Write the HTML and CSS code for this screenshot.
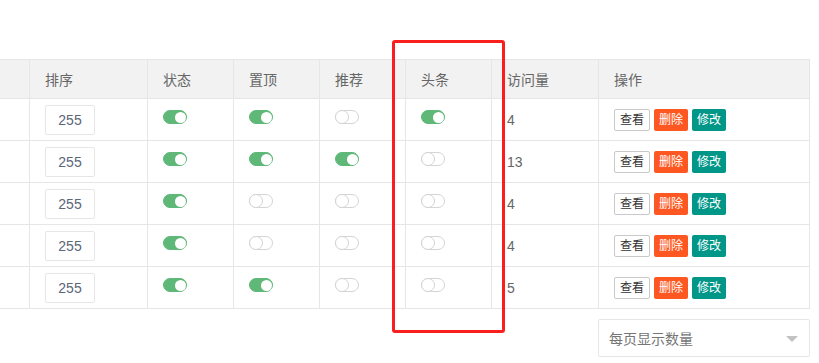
FILE: index.html
```html
<!DOCTYPE html>
<html lang="zh-CN">
<head>
<meta charset="utf-8">
<title>列表</title>
<link rel="stylesheet" href="styles.css">
</head>
<body>
<div class="page">
  <div class="grid">
    <div class="row head">
      <div class="cell"></div>
      <div class="cell">排序</div>
      <div class="cell">状态</div>
      <div class="cell">置顶</div>
      <div class="cell">推荐</div>
      <div class="cell">头条</div>
      <div class="cell">访问量</div>
      <div class="cell">操作</div>
    </div>
    <div class="row">
      <div class="cell"></div>
      <div class="cell"><div class="sort">255</div></div>
      <div class="cell sw"><span class="switch on"></span></div>
      <div class="cell sw"><span class="switch on"></span></div>
      <div class="cell sw"><span class="switch"></span></div>
      <div class="cell sw"><span class="switch on"></span></div>
      <div class="cell">4</div>
      <div class="cell ops"><span class="btn plain">查看</span><span class="btn danger">删除</span><span class="btn normal">修改</span></div>
    </div>
    <div class="row">
      <div class="cell"></div>
      <div class="cell"><div class="sort">255</div></div>
      <div class="cell sw"><span class="switch on"></span></div>
      <div class="cell sw"><span class="switch on"></span></div>
      <div class="cell sw"><span class="switch on"></span></div>
      <div class="cell sw"><span class="switch"></span></div>
      <div class="cell">13</div>
      <div class="cell ops"><span class="btn plain">查看</span><span class="btn danger">删除</span><span class="btn normal">修改</span></div>
    </div>
    <div class="row">
      <div class="cell"></div>
      <div class="cell"><div class="sort">255</div></div>
      <div class="cell sw"><span class="switch on"></span></div>
      <div class="cell sw"><span class="switch"></span></div>
      <div class="cell sw"><span class="switch"></span></div>
      <div class="cell sw"><span class="switch"></span></div>
      <div class="cell">4</div>
      <div class="cell ops"><span class="btn plain">查看</span><span class="btn danger">删除</span><span class="btn normal">修改</span></div>
    </div>
    <div class="row">
      <div class="cell"></div>
      <div class="cell"><div class="sort">255</div></div>
      <div class="cell sw"><span class="switch on"></span></div>
      <div class="cell sw"><span class="switch"></span></div>
      <div class="cell sw"><span class="switch"></span></div>
      <div class="cell sw"><span class="switch"></span></div>
      <div class="cell">4</div>
      <div class="cell ops"><span class="btn plain">查看</span><span class="btn danger">删除</span><span class="btn normal">修改</span></div>
    </div>
    <div class="row">
      <div class="cell"></div>
      <div class="cell"><div class="sort">255</div></div>
      <div class="cell sw"><span class="switch on"></span></div>
      <div class="cell sw"><span class="switch on"></span></div>
      <div class="cell sw"><span class="switch"></span></div>
      <div class="cell sw"><span class="switch"></span></div>
      <div class="cell">5</div>
      <div class="cell ops"><span class="btn plain">查看</span><span class="btn danger">删除</span><span class="btn normal">修改</span></div>
    </div>
  </div>
  <div class="pager">
    <div class="select">
      <span class="placeholder">每页显示数量</span>
      <span class="caret"></span>
    </div>
  </div>
  <div class="highlight"></div>
</div>
</body>
</html>
```

FILE: styles.css
```css
html, body {
  margin: 0;
  padding: 0;
  background: #fff;
}
body {
  font-family: "Liberation Sans", "Noto Sans CJK SC", sans-serif;
  font-size: 14px;
  color: #666;
  overflow: hidden;
}
.page {
  position: relative;
  width: 819px;
  height: 363px;
  padding-top: 59px;
  box-sizing: border-box;
}
.grid {
  margin-left: -20px;
  width: 830px;
  border-top: 1px solid #e6e6e6;
}
.row {
  display: grid;
  grid-template-columns: 50px 118px 86px 86px 86px 86px 107px 211px;
  height: 42px;
}
.row.head {
  height: 39px;
  background: #f2f2f2;
}
.cell {
  box-sizing: border-box;
  border-right: 1px solid #e6e6e6;
  border-bottom: 1px solid #e6e6e6;
  padding: 0 15px;
  display: flex;
  align-items: center;
  white-space: nowrap;
}
.sort {
  box-sizing: border-box;
  width: 50px;
  height: 30px;
  border: 1px solid #e6e6e6;
  border-radius: 2px;
  color: #5c6678;
  display: flex;
  align-items: center;
  justify-content: center;
  margin-top: 1px;
}
.cell.sw {
  align-items: flex-start;
  padding-top: 11px;
}
.switch {
  position: relative;
  display: block;
  box-sizing: border-box;
  width: 24px;
  height: 14px;
  border: 1px solid #d4d4d4;
  border-radius: 7px;
  background: #fff;
}
.switch::after {
  content: "";
  position: absolute;
  left: -1px;
  top: -1px;
  box-sizing: border-box;
  width: 14px;
  height: 14px;
  border: 1.5px solid #d4d4d4;
  border-radius: 50%;
  background: #fff;
}
.switch.on {
  border-color: #5fb878;
  background: #5fb878;
}
.switch.on::after {
  left: auto;
  right: 0.5px;
  top: 0.5px;
  width: 11px;
  height: 11px;
  border: none;
}
.cell.ops {
  gap: 4px;
  padding-top: 1px;
}
.btn {
  display: inline-block;
  box-sizing: border-box;
  height: 22px;
  line-height: 22px;
  padding: 0 5px;
  font-size: 12px;
  border-radius: 2px;
  color: #fff;
}
.btn.plain {
  border: 1px solid #c9c9c9;
  line-height: 20px;
  background: #fff;
  color: #333;
}
.btn.danger {
  background: #ff5722;
}
.btn.normal {
  background: #009688;
}
.pager {
  display: flex;
  justify-content: flex-end;
  width: 810px;
  margin-top: 10px;
}
.select {
  position: relative;
  box-sizing: border-box;
  width: 212px;
  height: 38px;
  border: 1px solid #e6e6e6;
  border-radius: 2px;
  display: flex;
  align-items: center;
  padding-left: 10px;
  color: #757575;
}
.caret {
  position: absolute;
  right: 11px;
  top: 16px;
  width: 0;
  height: 0;
  border-left: 6px solid transparent;
  border-right: 6px solid transparent;
  border-top: 6px solid #c2c2c2;
}
.highlight {
  position: absolute;
  left: 392px;
  top: 40px;
  width: 113px;
  height: 293px;
  box-sizing: border-box;
  border: 3px solid #fa1e1e;
  border-radius: 3px;
}
```
